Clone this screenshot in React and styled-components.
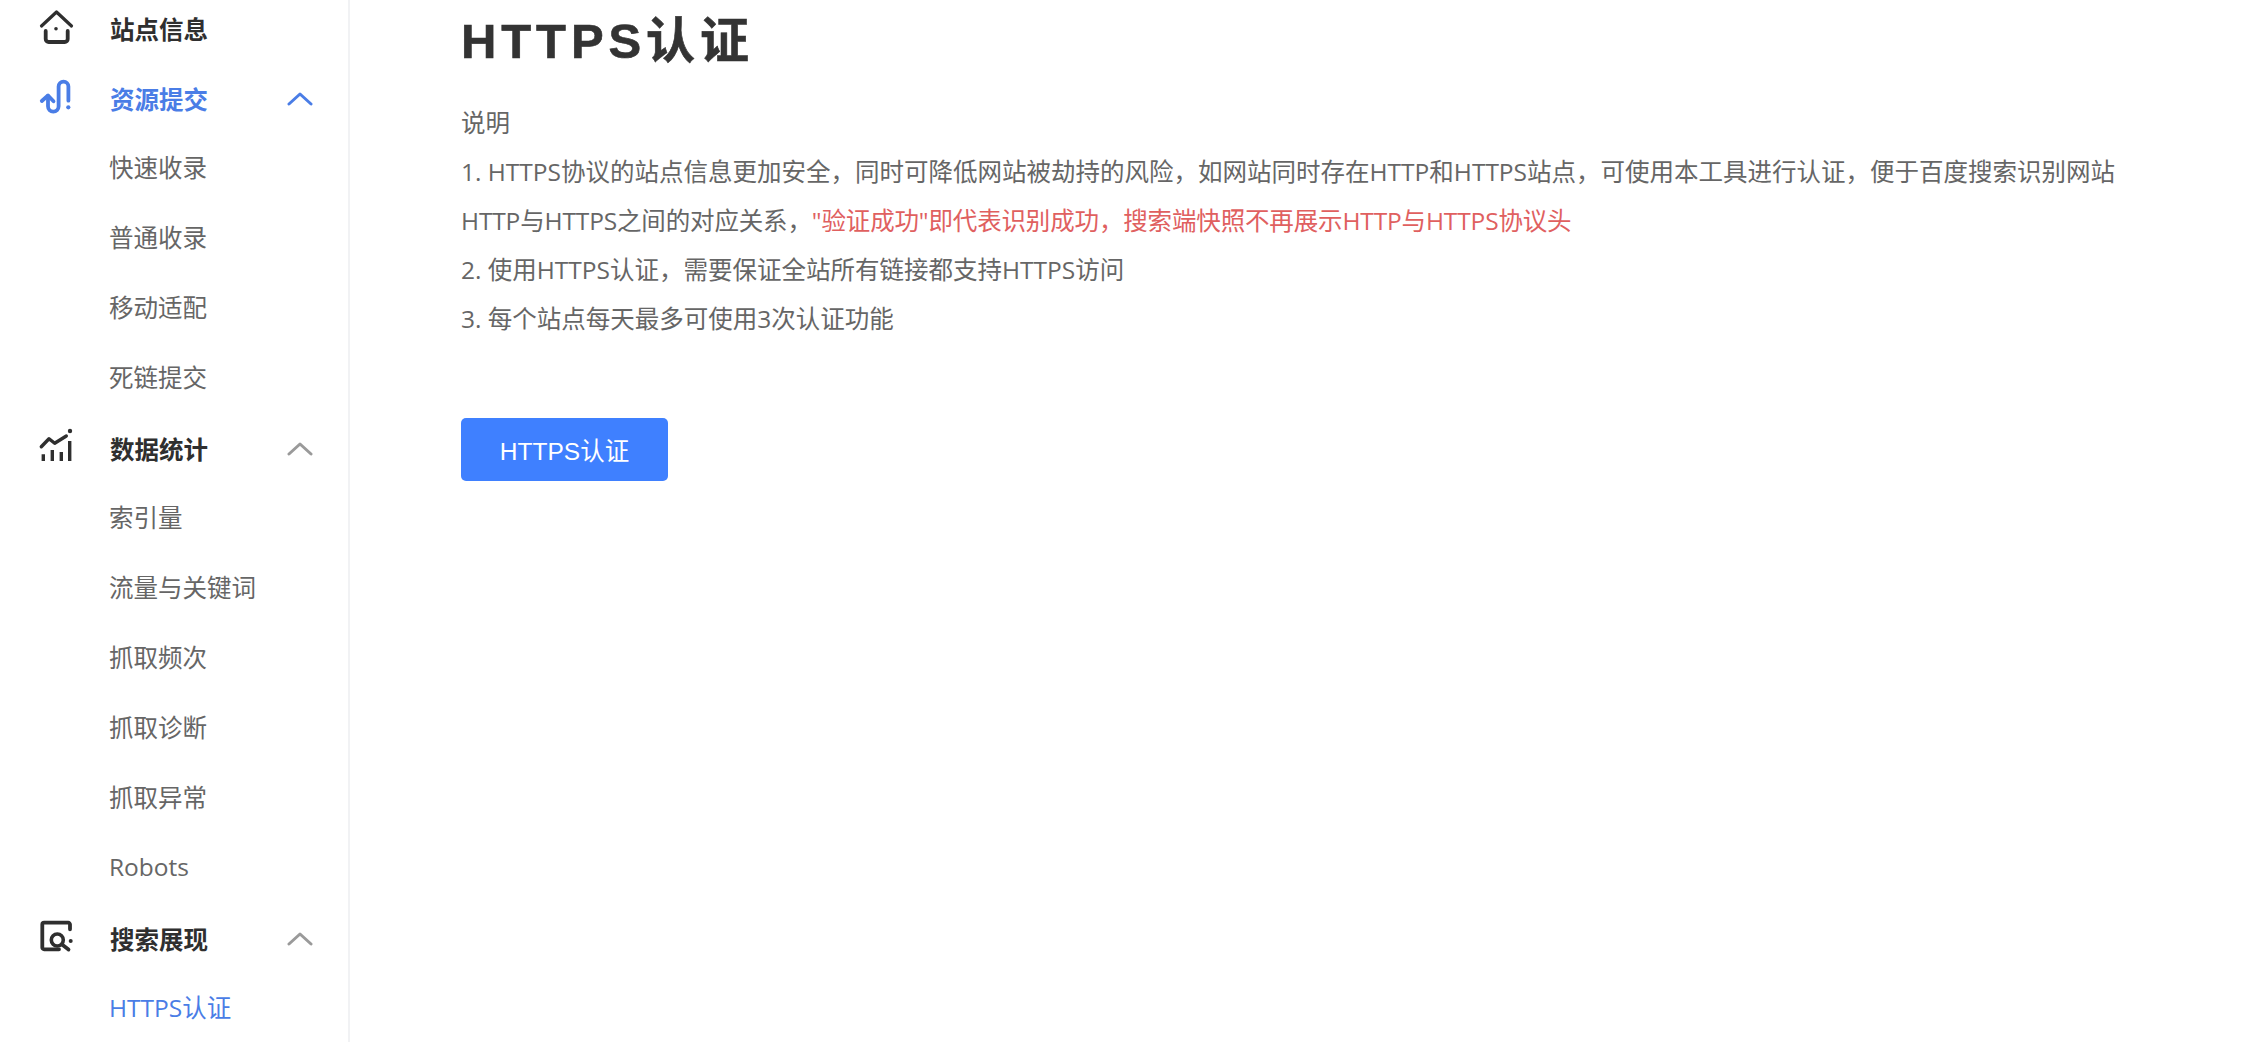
import React from "react";
import styled, { createGlobalStyle } from "styled-components";

const Global = createGlobalStyle`
  html, body { margin: 0; padding: 0; height: 100%; overflow: hidden; background: #fff; }
  #root { height: 100%; }
`;
const SANS = `"Open Sans", "Noto Sans CJK SC", "Liberation Sans", sans-serif`;
const BLUE = "#4a7de6";

const Page = styled.div`
  display: flex;
  height: 1042px;
  overflow: hidden;
  font-family: ${SANS};
`;
const Sidebar = styled.nav`
  width: 348px;
  height: 1042px;
  flex: none;
  border-right: 2px solid #f1f2f4;
  overflow: hidden;
`;
const Menu = styled.div`
  display: flex;
  flex-direction: column;
  margin-top: -6px;
`;
const GroupRow = styled.div`
  height: 70px;
  display: flex;
  align-items: center;
  padding-left: 40px;
  color: ${(p) => (p.$active ? BLUE : "#2f2f2f")};
  font-size: 24.5px;
  font-weight: 700;
`;
const IconSlot = styled.span`
  width: 32px;
  height: 32px;
  display: block;
  flex: none;
  margin-right: 38px;
  svg { display: block; overflow: visible; }
`;
const Label = styled.span`
  width: 177px;
  flex: none;
  line-height: 34px;
  padding-top: 1px;
`;
const Chevron = styled.svg`
  width: 26px;
  height: 14px;
  flex: none;
  stroke: ${(p) => (p.$active ? BLUE : "#9a9a9a")};
  stroke-width: 3;
  fill: none;
  stroke-linecap: round;
  stroke-linejoin: round;
`;
const SubRow = styled.div`
  height: 70px;
  box-sizing: border-box;
  padding: 0 0 5px 109px;
  display: flex;
  align-items: center;
  font-size: 24.5px;
  color: ${(p) => (p.$active ? BLUE : "#666")};
`;
const Main = styled.main`
  flex: 1;
  padding-left: 111px;
  min-width: 0;
`;
const Title = styled.h1`
  margin: 0;
  padding-top: 8px;
  height: 73px;
  box-sizing: border-box;
  font-family: "Liberation Sans", "Noto Sans CJK SC", sans-serif;
  font-size: 49px;
  line-height: 66px;
  font-weight: 700;
  letter-spacing: 4.9px;
  color: #333;
  -webkit-text-stroke: 0.6px #333;
`;
const Notes = styled.div`
  margin-top: 25px;
  font-size: 24.5px;
  line-height: 49px;
  color: #666;
`;
const Line = styled.div`
  white-space: nowrap;
  letter-spacing: ${(p) => (p.$tight ? "-0.15px" : "0")};
`;
const Warn = styled.span`
  color: #e0605f;
`;
const Button = styled.button`
  display: block;
  width: 207px;
  height: 63px;
  margin-top: 75px;
  padding: 0;
  border: 0;
  border-radius: 5px;
  background: #3f80ff;
  color: #fff;
  font-family: "Liberation Sans", "Noto Sans CJK SC", sans-serif;
  font-size: 24.5px;
`;

const S = { fill: "none", stroke: "currentColor", strokeWidth: 3, strokeLinecap: "round", strokeLinejoin: "round" };

const HomeIcon = () => (
  <svg width="32" height="32" viewBox="0 0 32 32">
    <path {...S} strokeWidth="3.2" d="M1.5 13 16.500 -1 31.500 13" />
    <path {...S} strokeWidth="3.8" d="M5.700 18v8a3 3 0 0 0 3 3h16a3 3 0 0 0 3-3v-8" />
    <circle cx="16" cy="15.700" r="1.800" fill="currentColor" />
  </svg>
);
const SubmitIcon = () => (
  <svg width="32" height="32" viewBox="0 0 32 32">
    <path {...S} strokeWidth="3.8" d="M1.800 18 8 12.500 13.500 18.300" />
    <path {...S} strokeWidth="3.8" d="M8 13v10.300a5.300 5.300 0 0 0 10.600 0V3.500a4.900 4.900 0 0 1 9.800 0V17.700" />
    <circle cx="28.300" cy="24.300" r="2.100" fill="currentColor" />
  </svg>
);
const StatsIcon = () => (
  <svg width="32" height="32" viewBox="0 0 32 32">
    <path {...S} strokeWidth="3.4" d="M1.300 13.700 9 5.700 14.700 10.300 26.300 3" />
    <path {...S} strokeWidth="3.4" strokeLinecap="butt" d="M3.300 21.300V28M12.300 17V28M21.300 19V28M29.700 8V28" />
    <circle cx="30" cy="-2" r="2.200" fill="currentColor" />
  </svg>
);
const SearchIcon = () => (
  <svg width="32" height="32" viewBox="0 0 32 32">
    <path {...S} strokeWidth="3.800" d="M30 6.300V1.500a1.800 1.800 0 0 0-1.800-1.800H4.100a1.800 1.800 0 0 0-1.800 1.800V24.500a1.800 1.800 0 0 0 1.800 1.800H19" />
    <circle {...S} strokeWidth="3.600" cx="17.300" cy="17" r="6" />
    <path {...S} strokeWidth="3.800" d="M22 21.500 28.500 26.500" />
    <circle cx="30.700" cy="18" r="2" fill="currentColor" />
  </svg>
);

const Up = ({ active }) => (
  <Chevron $active={active} viewBox="0 0 26 14">
    <path d="M2 12 13 2l11 10" />
  </Chevron>
);

const groups = [
  { icon: <HomeIcon />, name: "站点信息", items: [] },
  { icon: <SubmitIcon />, name: "资源提交", active: true, chevron: true, items: ["快速收录", "普通收录", "移动适配", "死链提交"] },
  { icon: <StatsIcon />, name: "数据统计", chevron: true, items: ["索引量", "流量与关键词", "抓取频次", "抓取诊断", "抓取异常", "Robots"] },
  { icon: <SearchIcon />, name: "搜索展现", chevron: true, items: ["HTTPS认证"], current: "HTTPS认证" },
];

export default function App() {
  return (
    <Page>
      <Global />
      <Sidebar>
        <Menu>
          {groups.map((g) => (
            <React.Fragment key={g.name}>
              <GroupRow $active={g.active}>
                <IconSlot>{g.icon}</IconSlot>
                <Label>{g.name}</Label>
                {g.chevron && <Up active={g.active} />}
              </GroupRow>
              {g.items.map((it) => (
                <SubRow key={it} $active={it === g.current}>{it}</SubRow>
              ))}
            </React.Fragment>
          ))}
        </Menu>
      </Sidebar>
      <Main>
        <Title>HTTPS认证</Title>
        <Notes>
          <Line>说明</Line>
          <Line>1. HTTPS协议的站点信息更加安全，同时可降低网站被劫持的风险，如网站同时存在HTTP和HTTPS站点，可使用本工具进行认证，便于百度搜索识别网站</Line>
          <Line $tight>HTTP与HTTPS之间的对应关系，<Warn>"验证成功"即代表识别成功，搜索端快照不再展示HTTP与HTTPS协议头</Warn></Line>
          <Line>2. 使用HTTPS认证，需要保证全站所有链接都支持HTTPS访问</Line>
          <Line>3. 每个站点每天最多可使用3次认证功能</Line>
        </Notes>
        <Button>HTTPS认证</Button>
      </Main>
    </Page>
  );
}
